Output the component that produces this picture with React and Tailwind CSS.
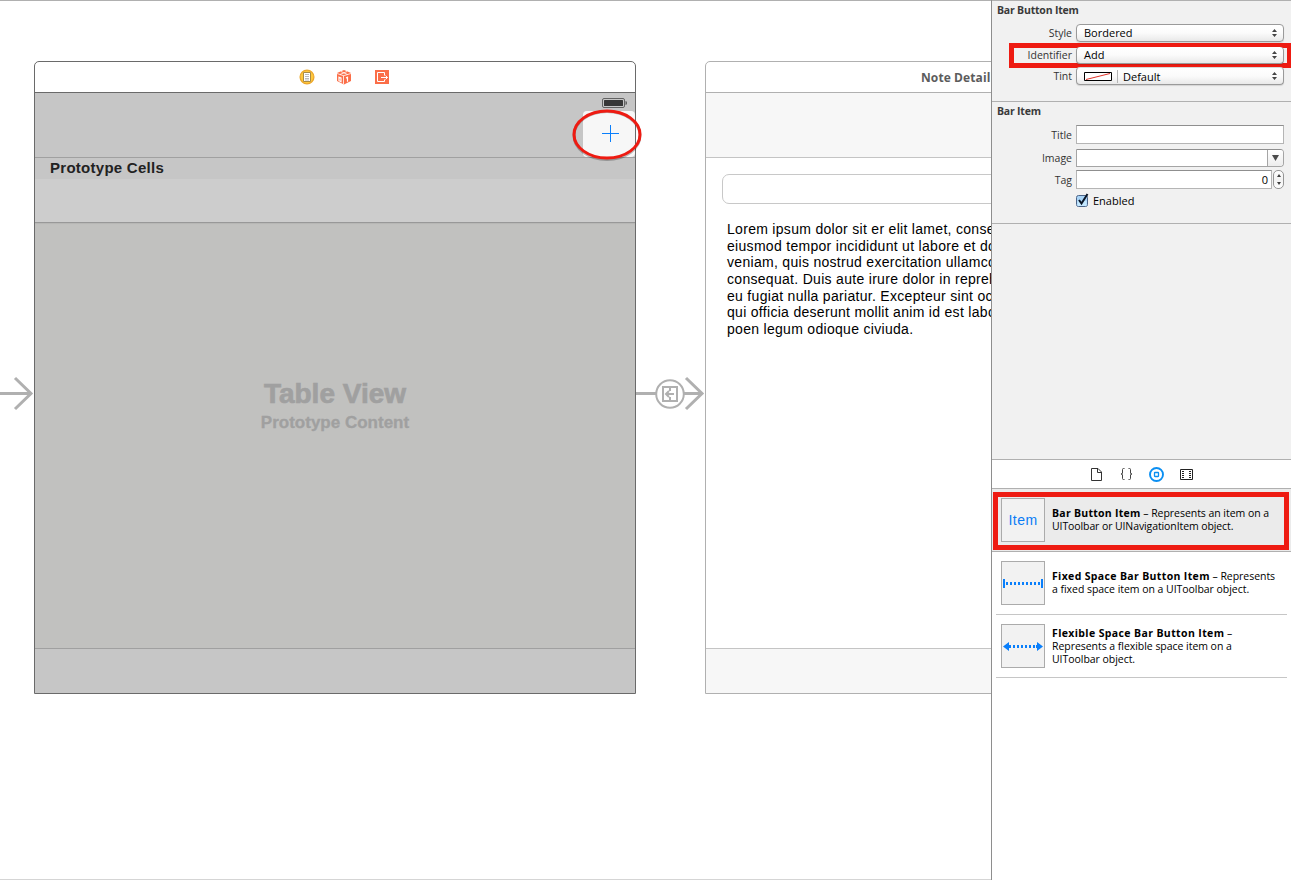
import React from 'react';

const helv = "font-['Liberation_Sans',Arial,sans-serif]";

function Arrows() {
  return (
    <svg className="h-[8px] w-[5px]" viewBox="0 0 5 8" fill="#444">
      <path d="M2.5 0 5 3H0zM2.5 8 0 5h5z" />
    </svg>
  );
}

function Select({ className, children }) {
  return (
    <div
      className={`flex w-[208px] shrink-0 items-center justify-between rounded-[4px] border border-[#9a9a9a] bg-gradient-to-b from-white via-[#fbfbfb] to-[#e9e9e9] pr-[6px] pl-[7px] text-[11px] text-black shadow-[0_1px_1px_rgba(0,0,0,0.12)] ${className}`}
    >
      {children}
      <Arrows />
    </div>
  );
}

function Label({ children, className = 'w-[84px]' }) {
  return <div className={`shrink-0 pr-[4px] text-right text-[10.5px] text-[#333] ${className}`}>{children}</div>;
}

function Heading({ children }) {
  return (
    <h2 className="ml-[5px] h-[23px] pt-[3px] text-[10.5px] leading-[13px] font-bold tracking-[-0.2px] text-[#3a3a3a]">
      {children}
    </h2>
  );
}

function LibraryItem({ thumb, children, className = '' }) {
  return (
    <div className={`flex ${className}`}>
      <div className="flex h-[44px] w-[44px] shrink-0 items-center justify-center border border-[#ababab] bg-[#f2f2f2]">
        {thumb}
      </div>
      <div className="ml-[7px] text-[10.5px] leading-[13px] tracking-[-0.04px] whitespace-nowrap text-black">{children}</div>
    </div>
  );
}

function Inspector() {
  return (
    <aside className="flex w-[300px] shrink-0 flex-col border-l border-[#8e8e8e] bg-white font-['Open_Sans','Noto_Sans',sans-serif]">
      <section className="h-[102px] border-t border-b border-[#b0b0b0] bg-[#f1f1f1]">
        <Heading>Bar Button Item</Heading>
        <div className="flex h-[18px] items-center leading-[16px]">
          <Label>Style</Label>
          <Select className="h-[18px]">Bordered</Select>
        </div>
        <div className="mt-px ml-[17px] flex h-[25px] items-center border-[5px] border-r-[4px] border-[#ee1b12]">
          <Label className="w-[62px] leading-[15px]">Identifier</Label>
          <Select className="h-[17px] border-t-0">Add</Select>
        </div>
        <div className="flex h-[16px] items-center leading-[15px]">
          <Label>Tint</Label>
          <Select className="h-[18px] border-t-[#d8d8d8]">
            <span className="flex flex-1 items-center">
              <svg className="h-[9px] w-[28px]" viewBox="0 0 28 9">
                <path d="M.5.5h27v8H.5z" fill="#fff" stroke="#000" />
                <path d="m2 7.5 24-6" stroke="#e2332a" />
              </svg>
              <span className="ml-[5px] h-[13px] w-px bg-[#b5b5b5]" />
              <span className="ml-[5px]">Default</span>
            </span>
          </Select>
        </div>
      </section>

      <section className="h-[122px] border-b border-[#b0b0b0] bg-[#f1f1f1]">
        <Heading>Bar Item</Heading>
        <div className="flex h-[19px] items-center">
          <Label className="w-[84px] pt-[2px]">Title</Label>
          <div className="h-[19px] w-[208px] border border-[#b5b5b5] border-t-[#8f8f8f] bg-white" />
        </div>
        <div className="mt-[5px] flex h-[18px] items-center">
          <Label className="w-[84px] pt-[2px]">Image</Label>
          <div className="flex h-[18px] w-[208px] overflow-hidden rounded-r-[4px] border border-[#a5a5a5] border-t-[#8f8f8f] bg-white">
            <div className="ml-auto flex w-[16px] items-center justify-center border-l border-[#a5a5a5] bg-gradient-to-b from-white to-[#ececec]">
              <svg className="h-[6px] w-[7px]" viewBox="0 0 7 6" fill="#4a4a4a">
                <path d="M0 0h7L3.500 6z" />
              </svg>
            </div>
          </div>
        </div>
        <div className="mt-[3px] flex h-[19px] items-center">
          <Label className="w-[84px] pt-[2px]">Tag</Label>
          <div className="flex h-[19px] w-[196px] items-center justify-end border border-[#b5b5b5] border-t-[#8f8f8f] bg-white pt-[2px] pr-[3px] text-[11px] text-black">
            0
          </div>
          <div className="ml-[1px] flex h-[19px] w-[11px] items-center justify-center rounded-[5px] border border-[#969696] bg-gradient-to-b from-white via-[#f2f2f2] to-white">
            <svg className="h-[11px] w-[4px]" viewBox="0 0 4 11" fill="#3f3f3f">
              <path d="m2 0 2 3H0zM2 11 0 8h4z" />
            </svg>
          </div>
        </div>
        <div className="mt-[3px] ml-[84px] flex h-[16px] items-center text-[11px] text-black">
          <svg className="h-[15px] w-[14px]" viewBox="0 0 14 15">
            <rect x=".5" y="2.500" width="11" height="11" rx="2" fill="#a9d4f7" stroke="#4c6488" />
            <path d="M1.500 8h9v5h-9z" fill="#c4e8ff" />
            <path d="m3 7 2.500 3.500L11.500 1" fill="none" stroke="#0a1526" strokeWidth="2" />
          </svg>
          <span className="ml-[3px] pt-[2px]">Enabled</span>
        </div>
      </section>

      <div className="h-[236px] border-b border-[#b0b0b0] bg-[#f1f1f1]" />

      <nav className="flex h-[29px] items-center border-b border-[#b0b0b0] pl-[98px]">
        <svg className="h-[13px] w-[13px]" viewBox="0 0 13 13" fill="none" stroke="#333">
          <path d="M1.500.5H8L11.500 4v8.500h-10zM7.500.5v4h4" />
        </svg>
        <svg className="ml-[17px] h-[14px] w-[13px]" viewBox="0 0 13 14" fill="none" stroke="#444">
          <path d="M4.500 1.500h-1q-1 0-1 1V6q0 1-1.500 1 1.500 0 1.500 1v3.500q0 1 1 1h1M8.500 1.500h1q1 0 1 1V6q0 1 1.500 1-1.500 0-1.500 1v3.500q0 1-1 1h-1" />
        </svg>
        <svg className="ml-[16px] h-[15px] w-[15px]" viewBox="0 0 15 15" fill="none" stroke="#0b8ff2">
          <circle cx="7.500" cy="7.500" r="6.500" strokeWidth="1.900" />
          <rect x="5.500" y="5.500" width="4" height="4" rx=".5" strokeWidth="1.300" />
        </svg>
        <svg className="ml-[16px] h-[11px] w-[13px]" viewBox="0 0 13 11" fill="none" stroke="#222">
          <path d="M.5.5h12v10H.5z" />
          <path d="M3 2v8M10 2v8" strokeDasharray="1 1" strokeWidth="2" />
        </svg>
      </nav>

      <div className="h-[63px] border-b border-[#b0b0b0] bg-[#ebebeb] pt-[3px] pl-[1px]">
        <div className="h-[58px] w-[296px] border-[5px] border-[#ee1b12] pt-px pl-[3px]">
          <LibraryItem
            thumb={<span className={`text-[14px] tracking-[0.5px] text-[#0a7cf5] ${helv}`}>Item</span>}
          >
            <div className="pt-[9px]">
              <b className="tracking-[0.26px]">Bar Button Item</b> – Represents an item on a<br />
              <span className="tracking-[-0.1px]">UIToolbar or UINavigationItem object.</span>
            </div>
          </LibraryItem>
        </div>
      </div>

      <div className="mr-[4px] ml-[4px] h-[63px] border-b border-[#c6c6c6] pt-[9px] pl-[5px]">
        <LibraryItem
          thumb={
            <svg className="h-[42px] w-[42px]" viewBox="0 0 42 42" fill="#0a7ffb">
              <path d="M1 17h2v9H1zM39 17h2v9h-2z" />
              <path d="M4 20h2v3H4zM8 20h2v3H8zM12 20h2v3h-2zM16 20h2v3h-2zM20 20h2v3h-2zM24 20h2v3h-2zM28 20h2v3h-2zM32 20h2v3h-2zM36 20h2v3h-2z" />
            </svg>
          }
        >
          <div className="pt-[9px]">
            <b className="tracking-[0.35px]">Fixed Space Bar Button Item</b> – Represents<br />a fixed space item on a UIToolbar object.
          </div>
        </LibraryItem>
      </div>

      <div className="mr-[4px] ml-[4px] h-[63px] border-b border-[#c6c6c6] pt-[9px] pl-[5px]">
        <LibraryItem
          thumb={
            <svg className="h-[42px] w-[42px]" viewBox="0 0 42 42" fill="#0a7ffb">
              <path d="m1 21.500 6-4.500v9zM41 21.500 35 17v9z" />
              <path d="M7 20h2v3H7zM11 20h2v3h-2zM15 20h2v3h-2zM19 20h2v3h-2zM23 20h2v3h-2zM27 20h2v3h-2zM31 20h2v3h-2zM34 20h2v3h-2z" />
            </svg>
          }
        >
          <div className="pt-[3px]">
            <b className="tracking-[0.38px]">Flexible Space Bar Button Item</b> –<br />
            Represents a flexible space item on a<br />
            UIToolbar object.
          </div>
        </LibraryItem>
      </div>
    </aside>
  );
}

function TableScene() {
  return (
    <div className="relative flex h-[633px] w-[602px] shrink-0 flex-col rounded-t-[5px] border border-[#6a6a6a] bg-white">
      <div className="flex h-[31px] items-center border-b border-[#6a6a6a] pl-[264px]">
        <svg className="h-[16px] w-[16px]" viewBox="0 0 16 16">
          <circle cx="8" cy="8" r="6.900" fill="#ffc83c" stroke="#eca72c" strokeWidth="1.300" />
          <path d="M4.500 3.500h7v9h-7z" fill="#fff" stroke="#a88a45" />
          <path d="M6 5.500h4M6 7.500h4M6 9.500h4M6 11h4" stroke="#aaa" strokeWidth=".8" />
        </svg>
        <svg className="ml-[21px] h-[16px] w-[16px]" viewBox="0 0 16 16">
          <path d="m1 4 7-3 7 3v8l-7 3.500L1 12z" fill="#fb6e48" />
          <path d="m1 4.500 6.500 2.200L15 4.500M7.500 6.500V15M5 2.500l6.500 3M11 2.500l-7 3" fill="none" stroke="#fff" strokeWidth=".8" />
          <path d="M3 8.200 5 9v3.500l-2-.8zM10 9l1.500-.8v4.500" fill="none" stroke="#fff" strokeWidth="1.200" />
        </svg>
        <svg className="ml-[23px] h-[14px] w-[14px]" viewBox="0 0 14 14" fill="none" stroke="#fff">
          <path d="M0 0h14v14H0z" fill="#fb6e48" stroke="none" />
          <path d="M9.500 5.500v-3h-7v9h7v-2M6 7.500h6.500M10.500 5.500l2 2-2 2" />
        </svg>
      </div>
      <div className="flex h-[65px] flex-col items-end border-b border-[#a0a0a0] bg-[#c6c6c6] pt-[5px]">
        <svg className="mr-[8px] h-[11px] w-[25px]" viewBox="0 0 25 11">
          <rect x=".5" y=".5" width="22" height="9" rx="1.500" fill="#c6c6c6" stroke="#626262" />
          <rect x="2" y="2" width="19" height="6" rx=".5" fill="#373737" />
          <path d="M23.500 3q1.500 0 1.500 2t-1.500 2z" fill="#555" />
        </svg>
        <div className="mt-[2px] flex h-[46px] w-[52px] items-center justify-center rounded-[4px] bg-[#f7f7f7] pb-[2px] pl-[2px]">
          <svg className="h-[17px] w-[17px]" viewBox="0 0 17 17" stroke="#0a7ffb">
            <path d="M8.500 0v17M0 8.500h17" />
          </svg>
        </div>
      </div>
      <div className={`h-[21px] bg-[#c6c6c6] pl-[15px] text-[15px] leading-[20px] font-bold tracking-[0.27px] text-[#222] ${helv}`}>
        Prototype Cells
      </div>
      <div className="h-[44px] border-b border-[#989898] bg-[#cdcdcd]" />
      <div className={`flex flex-1 flex-col items-center bg-[#c1c1bf] pt-[154px] font-bold text-[#a0a0a0] shadow-[inset_0_1px_1px_rgba(0,0,0,0.06)] ${helv}`}>
        <div className="text-[28px] leading-[34px] [-webkit-text-stroke:0.7px_#a0a0a0]">Table View</div>
        <div className="mt-[2px] text-[17px] leading-[20px] [-webkit-text-stroke:0.3px_#a0a0a0]">Prototype Content</div>
      </div>
      <div className="h-[45px] border-t border-[#a0a0a0] bg-[#c6c6c6]" />
      <svg className="absolute top-[45px] left-[535px] h-[56px] w-[74px]" viewBox="0 0 74 56" fill="none">
        <ellipse cx="37" cy="28.500" rx="33" ry="24" stroke="#000" strokeOpacity=".25" strokeWidth="3" />
        <ellipse cx="37" cy="27.500" rx="33" ry="23.500" stroke="#ee1b12" strokeWidth="3" />
      </svg>
    </div>
  );
}

function DetailScene() {
  return (
    <div className="flex h-[633px] w-[602px] shrink-0 flex-col rounded-t-[5px] border border-[#b0b0b0] bg-white">
      <div className="h-[31px] border-b border-[#b0b0b0] pl-[215px] font-['Open_Sans','Noto_Sans',sans-serif] text-[12px] leading-[31px] font-bold tracking-[0.1px] text-[#5c5c5c]">
        Note Detail
      </div>
      <div className="h-[65px] border-b border-[#c4c4c4] bg-[#f7f7f7]" />
      <div className="mt-[16px] ml-[16px] h-[30px] w-[568px] rounded-[7px] border border-[#c8c8c8]" />
      <div className={`mt-[17px] ml-[21px] flex-1 text-[14px] leading-[16.65px] tracking-[0.3px] whitespace-nowrap text-black ${helv}`}>
        Lorem ipsum dolor sit er elit lamet, consectetaur<br />
        eiusmod tempor incididunt ut labore et dolore<br />
        veniam, quis nostrud exercitation ullamco<br />
        consequat. Duis aute irure dolor in reprehenderit<br />
        eu fugiat nulla pariatur. Excepteur sint occaecat<br />
        qui officia deserunt mollit anim id est laborum<br />
        poen legum odioque civiuda.
      </div>
      <div className="h-[45px] border-t border-[#c4c4c4] bg-[#f7f7f7]" />
    </div>
  );
}

export default function App() {
  return (
    <div className="flex h-[880px] w-[1291px] overflow-hidden bg-white">
      <main className="flex w-[991px] shrink-0 overflow-hidden border-t border-b border-[#b0b0b0] border-b-[#d5d5d5] pt-[60px]">
        <svg className="mt-[312px] h-[40px] w-[34px] shrink-0" viewBox="0 0 34 40" fill="none" stroke="#b0b0b0" strokeWidth="3">
          <path d="M0 20.500h31M15 5l16 15.500L15 36" />
        </svg>
        <TableScene />
        <svg className="mt-[312px] h-[40px] w-[69px] shrink-0" viewBox="0 0 69 40" fill="none" stroke="#b0b0b0">
          <path d="M0 20.500h20M48 20.500h18M50 5l16 15.500L50 36" strokeWidth="3" />
          <circle cx="34" cy="21" r="13.800" strokeWidth="2" />
          <path d="M27 14h14v14H27zM34 14v4M34 24v4M38 21h-8M33 18l-3 3 3 3" strokeWidth="2" />
        </svg>
        <DetailScene />
      </main>
      <Inspector />
    </div>
  );
}
